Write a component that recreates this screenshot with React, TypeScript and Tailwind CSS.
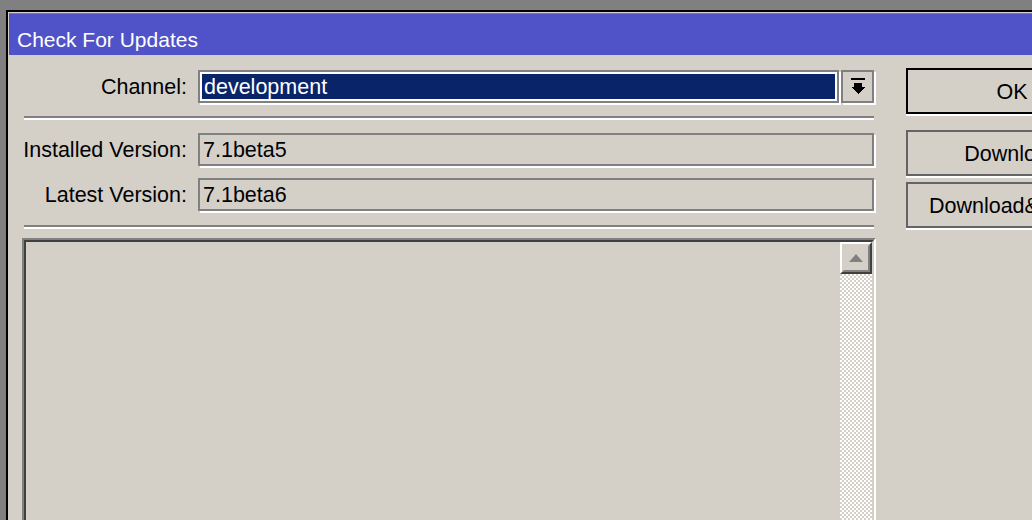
import React from 'react'

function DropArrow() {
  return (
    <svg width="14" height="17" viewBox="0 0 14 17" shapeRendering="crispEdges">
      <rect x="0" y="0" width="14" height="2" fill="#000" />
      <rect x="3" y="5" width="8" height="4" fill="#000" />
      <polygon points="0,9 14,9 7,16" fill="#000" />
    </svg>
  )
}

function UpArrow() {
  return (
    <svg width="16" height="10" viewBox="0 0 16 10">
      <polygon points="8,1 15,9 1,9" fill="#808080" />
    </svg>
  )
}

function Field({ label, value }: { label: string; value: string }) {
  return (
    <div className="flex h-[33px] items-center">
      <div className="w-[165px] pt-[3px] text-right">{label}</div>
      <div className="ml-[11px] mr-[2px] flex h-full flex-1 items-center border-2 border-[#808080] pl-[3px] pt-[3px] shadow-[2px_2px_0_#fff]">
        {value}
      </div>
    </div>
  )
}

function Separator({ className }: { className: string }) {
  return <div className={`mx-[2px] h-[4px] border-t-2 border-b-2 border-t-[#808080] border-b-white ${className}`} />
}

function Btn({ label, primary, className }: { label: string; primary?: boolean; className: string }) {
  return (
    <div
      className={`flex h-[46px] w-[212px] items-center justify-center border-2 pt-[3px] shadow-[0_2px_0_#fff] ${
        primary ? 'border-black' : 'border-[#646464]'
      } ${className}`}
    >
      {label}
    </div>
  )
}

export default function App() {
  return (
    <div className="h-[520px] w-[1032px] overflow-hidden bg-[#808080] pl-[6px] pt-[10px] font-['Liberation_Sans',Arial,sans-serif] text-[21.5px] leading-none text-black">
      <div className="flex h-[600px] w-[1200px] flex-col border-l-2 border-t-2 border-black bg-[#d4d0c8] pl-px pt-px">
        {/* Title bar */}
        <div className="flex h-[42px] items-center border-t border-[#6e71dc] bg-[#4f53c7] pl-[8px] pt-[9px] text-[21px] text-white">
          Check For Updates
        </div>

        {/* Body */}
        <div className="flex flex-1 pl-[13px] pt-[15px]">
          <div className="flex w-[854px] flex-col">
            <div className="flex h-[33px] items-center">
              <div className="w-[165px] pt-[3px] text-right">Channel:</div>
              <div className="ml-[11px] mr-[2px] flex h-full flex-1 gap-[2px]">
                <div className="flex-1 border-2 border-[#808080] shadow-[2px_2px_0_#fff]">
                  <div className="flex h-full items-center border-2 border-white bg-[#0a246a] pl-[2px] pt-[3px] text-white">
                    development
                  </div>
                </div>
                <div className="flex w-[33px] items-center justify-center border-2 border-[#808080] shadow-[2px_2px_0_#fff]">
                  <DropArrow />
                </div>
              </div>
            </div>

            <Separator className="mt-[13px]" />

            <div className="mt-[13px]">
              <Field label="Installed Version:" value="7.1beta5" />
            </div>
            <div className="mt-[12px]">
              <Field label="Latest Version:" value="7.1beta6" />
            </div>

            <Separator className="mt-[14px]" />

            {/* Text area */}
            <div className="mt-[9px] flex h-[320px] border-2 border-t-[#808080] border-l-[#808080] border-b-white border-r-white">
              <div className="flex flex-1 border-2 border-t-[#404040] border-l-[#404040] border-b-[#d4d0c8] border-r-[#d4d0c8]">
                <div className="flex-1" />
                <div className="flex w-[32px] flex-col">
                  <div className="h-[32px] border-2 border-t-white border-l-white border-b-[#404040] border-r-[#404040]">
                    <div className="flex h-full items-center justify-center border-2 border-t-[#d4d0c8] border-l-[#d4d0c8] border-b-[#808080] border-r-[#808080]">
                      <UpArrow />
                    </div>
                  </div>
                  <div className="flex-1 bg-[repeating-conic-gradient(#ffffff_0_25%,#d4d0c8_0_50%)] bg-[length:4px_4px]" />
                </div>
              </div>
            </div>
          </div>

          {/* Buttons */}
          <div className="ml-[30px] flex flex-col">
            <Btn label="OK" primary className="-mt-[2px]" />
            <Btn label="Download" className="mt-[16px]" />
            <Btn label="Download&Install" className="mt-[6px]" />
          </div>
        </div>
      </div>
    </div>
  )
}
